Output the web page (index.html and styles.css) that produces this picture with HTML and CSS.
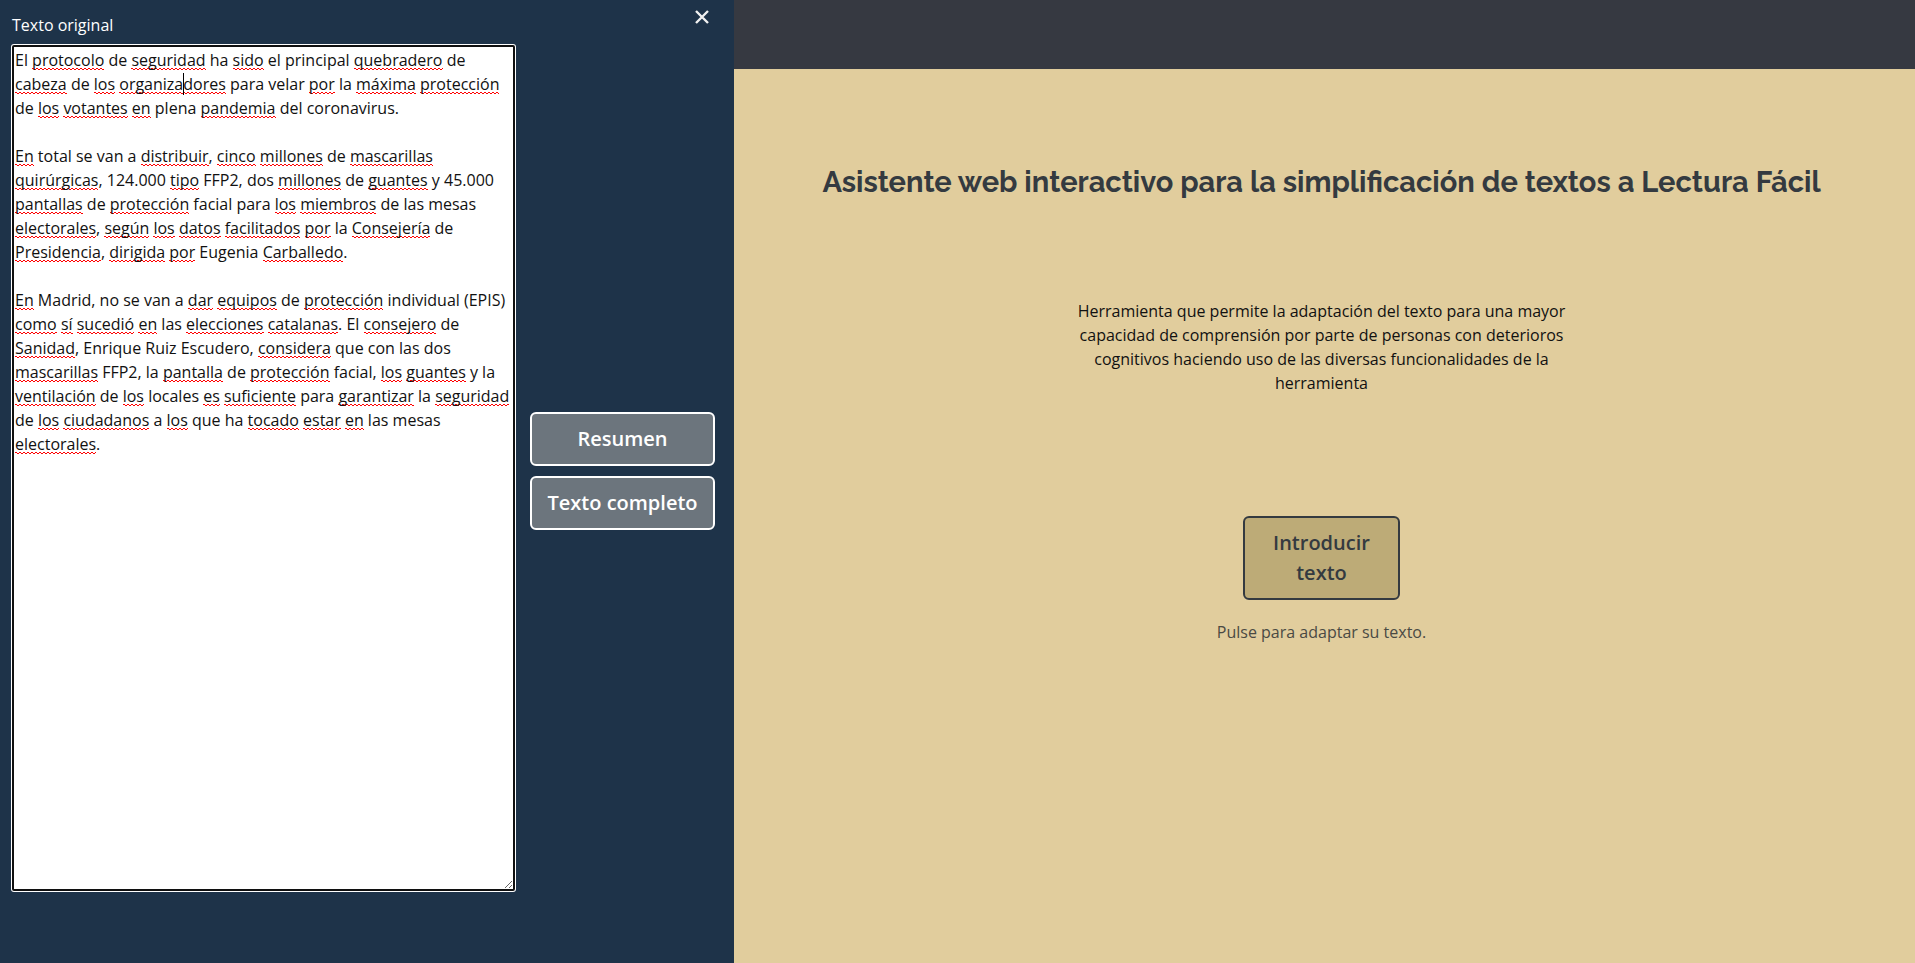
FILE: index.html
```html
<!DOCTYPE html>
<html lang="es">
<head>
<meta charset="utf-8">
<meta name="viewport" content="width=device-width, initial-scale=1">
<title>Lectura Fácil</title>
<link rel="stylesheet" href="styles.css">
</head>
<body>
<div class="layout">
  <aside class="sidebar">
    <div class="editor">
      <label class="editor-label" for="original">Texto original</label>
      <div class="editor-box">
        <div class="spelling" id="spelling" aria-hidden="true"></div>
        <textarea class="editor-input" id="original" spellcheck="false">El protocolo de seguridad ha sido el principal quebradero de cabeza de los organizadores para velar por la máxima protección de los votantes en plena pandemia del coronavirus.

En total se van a distribuir, cinco millones de mascarillas quirúrgicas, 124.000 tipo FFP2, dos millones de guantes y 45.000 pantallas de protección facial para los miembros de las mesas electorales, según los datos facilitados por la Consejería de Presidencia, dirigida por Eugenia Carballedo.

En Madrid, no se van a dar equipos de protección individual (EPIS) como sí sucedió en las elecciones catalanas. El consejero de Sanidad, Enrique Ruiz Escudero, considera que con las dos mascarillas FFP2, la pantalla de protección facial, los guantes y la ventilación de los locales es suficiente para garantizar la seguridad de los ciudadanos a los que ha tocado estar en las mesas electorales.</textarea>
      </div>
    </div>
    <div class="actions">
      <button class="close" type="button" aria-label="Cerrar"><svg viewBox="0 0 14 14" width="14" height="14"><path d="M1 1L13 13M13 1L1 13" fill="none" stroke="currentColor" stroke-width="2.4"/></svg></button>
      <div class="choices">
        <button class="button button-grey" type="button">Resumen</button>
        <button class="button button-grey" type="button">Texto completo</button>
      </div>
    </div>
  </aside>
  <div class="page">
    <header class="topbar"></header>
    <main class="content">
      <h1 class="title">Asistente web interactivo para la simplificación de textos a Lectura Fácil</h1>
      <p class="lead">Herramienta que permite la adaptación del texto para una mayor capacidad de comprensión por parte de personas con deterioros cognitivos haciendo uso de las diversas funcionalidades de la herramienta</p>
      <button class="button button-sand" type="button">Introducir texto</button>
      <p class="hint">Pulse para adaptar su texto.</p>
    </main>
  </div>
</div>
<script src="script.js"></script>
</body>
</html>
```
FILE: styles.css
```css
* {
  box-sizing: border-box;
}

body {
  margin: 0;
  background: #e1cd9d;
  color: #111;
  font: 16px/24px "Open Sans", "Noto Sans", sans-serif;
}

.layout {
  display: flex;
  min-height: 100vh;
}

.sidebar {
  display: flex;
  width: 38.33%;
  flex: none;
  padding: 0 19px 0 11px;
  gap: 14px;
  background: #1e3349;
  color: #fff;
}

.editor {
  display: flex;
  flex: 1;
  flex-direction: column;
  gap: 7px;
  padding: 13px 0 71px;
}

.editor-label {
  padding-left: 1px;
}

.editor-box {
  position: relative;
  display: flex;
  flex: 1;
  margin: 1px;
  padding-top: 1px;
  border: 2px solid #101010;
  border-radius: 2px;
  background: #fff;
  box-shadow: 0 0 0 1px #fff;
  color: #111;
}

.editor-input,
.spelling {
  margin: 0;
  padding: 0 1px;
  border: 0;
  background: none;
  font: inherit;
  white-space: pre-wrap;
  overflow-wrap: break-word;
}

.editor-input {
  position: relative;
  flex: 1;
  color: inherit;
  outline: 0;
  resize: vertical;
}

.spelling {
  position: absolute;
  inset: 1px 0 0;
  overflow: hidden;
  color: transparent;
}

.misspelled {
  background-image:
    linear-gradient(90deg, #f00 0 2px, transparent 2px),
    linear-gradient(90deg, transparent 0 2px, #f00 2px);
  background-position: left bottom 2px, left bottom 1px;
  background-repeat: repeat-x;
  background-size: 4px 1px;
}

.caret {
  margin-right: -1px;
  border-left: 1px solid #000;
}

.actions {
  display: flex;
  width: 185px;
  flex-direction: column;
  align-items: flex-end;
  padding-bottom: 45px;
}

.close {
  display: flex;
  margin: 10px 6px 0 0;
  padding: 0;
  border: 0;
  background: none;
  color: #f1f1f1;
}

.choices {
  display: grid;
  width: 100%;
  gap: 10px;
  margin: auto 0;
}

.button {
  padding: 10px 14px;
  border: 2px solid #fff;
  border-radius: 6px;
  font: 600 20px/30px "Open Sans", "Noto Sans", sans-serif;
}

.button-grey {
  background: #6c757d;
  color: #fff;
}

.button-sand {
  width: 157px;
  margin-top: 121px;
  border-color: #343a40;
  background: #bdab77;
  color: #343a40;
}

.page {
  flex: 1;
}

.topbar {
  height: 69px;
  background: #363941;
}

.content {
  display: flex;
  flex-direction: column;
  align-items: center;
  padding: 93px 18px 0 12px;
  text-align: center;
}

.title {
  margin: 0;
  color: #343a40;
  font: 700 29px/40px Raleway, Lato, sans-serif;
}

.lead {
  max-width: 500px;
  margin: 97px 0 0;
}

.hint {
  margin: 20px 0 0;
  color: #4a4a44;
}
```
FILE: script.js
```js
const unknown = new Set(("protocolo seguridad sido quebradero cabeza los organizadores por máxima protección " +
  "votantes en pandemia distribuir cinco millones mascarillas quirúrgicas tipo guantes pantallas pantalla " +
  "miembros electorales según datos facilitados consejería presidencia dirigida carballedo dar equipos " +
  "como sí sucedió elecciones catalanas consejero sanidad considera ventilación es suficiente garantizar " +
  "ciudadanos tocado estar").split(" "));
const input = document.getElementById("original");
const layer = document.getElementById("spelling");
let position = input.value.indexOf("dores para");

function mark() {
  layer.textContent = "";
  let index = 0;
  for (const part of input.value.split(/([\p{L}\d]+)/u)) {
    const span = document.createElement("span");
    if (unknown.has(part.toLowerCase())) span.className = "misspelled";
    const offset = position - index;
    if (offset > 0 && offset <= part.length) {
      const caret = document.createElement("span");
      caret.className = "caret";
      span.append(part.slice(0, offset), caret, part.slice(offset));
    } else {
      span.textContent = part;
    }
    layer.append(span);
    index += part.length;
  }
}

input.addEventListener("input", () => {
  position = input.selectionStart;
  mark();
});
input.addEventListener("scroll", () => { layer.scrollTop = input.scrollTop; });
mark();
```
